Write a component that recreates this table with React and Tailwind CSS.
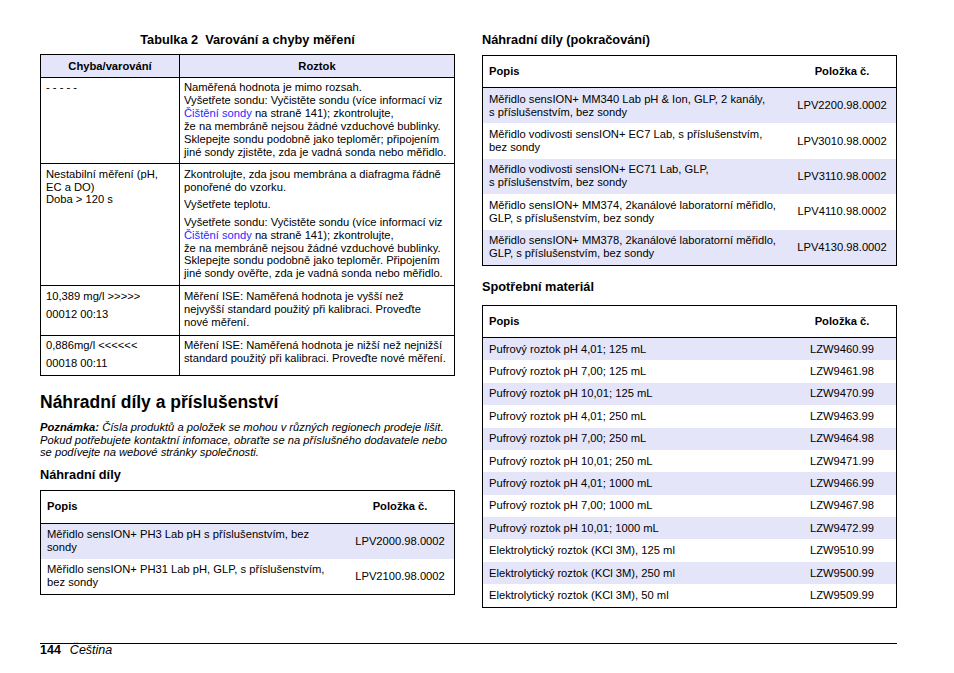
import React from 'react';

const lav = 'bg-[#e5e5f9]';

const partsTop = [
  ['Měřidlo sensION+ MM340 Lab pH & Ion, GLP, 2 kanály,', 's příslušenstvím, bez sondy', 'LPV2200.98.0002'],
  ['Měřidlo vodivosti sensION+ EC7 Lab, s příslušenstvím,', 'bez sondy', 'LPV3010.98.0002'],
  ['Měřidlo vodivosti sensION+ EC71 Lab, GLP,', 's příslušenstvím, bez sondy', 'LPV3110.98.0002'],
  ['Měřidlo sensION+ MM374, 2kanálové laboratorní měřidlo,', 'GLP, s příslušenstvím, bez sondy', 'LPV4110.98.0002'],
  ['Měřidlo sensION+ MM378, 2kanálové laboratorní měřidlo,', 'GLP, s příslušenstvím, bez sondy', 'LPV4130.98.0002'],
];

const partsLeft = [
  ['Měřidlo sensION+ PH3 Lab pH s příslušenstvím, bez', 'sondy', 'LPV2000.98.0002'],
  ['Měřidlo sensION+ PH31 Lab pH, GLP, s příslušenstvím,', 'bez sondy', 'LPV2100.98.0002'],
];

const consumables = [
  ['Pufrový roztok pH 4,01; 125 mL', 'LZW9460.99'],
  ['Pufrový roztok pH 7,00; 125 mL', 'LZW9461.98'],
  ['Pufrový roztok pH 10,01; 125 mL', 'LZW9470.99'],
  ['Pufrový roztok pH 4,01; 250 mL', 'LZW9463.99'],
  ['Pufrový roztok pH 7,00; 250 mL', 'LZW9464.98'],
  ['Pufrový roztok pH 10,01; 250 mL', 'LZW9471.99'],
  ['Pufrový roztok pH 4,01; 1000 mL', 'LZW9466.99'],
  ['Pufrový roztok pH 7,00; 1000 mL', 'LZW9467.98'],
  ['Pufrový roztok pH 10,01; 1000 mL', 'LZW9472.99'],
  ['Elektrolytický roztok (KCl 3M), 125 ml', 'LZW9510.99'],
  ['Elektrolytický roztok (KCl 3M), 250 ml', 'LZW9500.99'],
  ['Elektrolytický roztok (KCl 3M), 50 ml', 'LZW9509.99'],
];

const Link = ({ children }) => <span className="text-[#1f2bff]">{children}</span>;

const PartsHeader = ({ h }) => (
  <div className={`flex items-center border-b border-black font-bold ${h}`}>
    <div className="flex-1 pl-[6px]">Popis</div>
    <div className="w-[108px] text-center">Položka č.</div>
  </div>
);

const App = () => {
  return (
    <div className="w-[954px] h-[673px] bg-white text-black text-[11.2px] leading-[13px] whitespace-nowrap" style={{ fontFamily: '"Liberation Sans", Arial, sans-serif' }}>
      <div className="h-[643px] pt-[33px] pl-[40px] flex gap-[27px]">
        {/* Left column */}
        <div className="w-[415px] flex flex-col">
          <div className="text-center font-bold text-[12.75px] leading-[14px] whitespace-pre">Tabulka 2  Varování a chyby měření</div>

          <div className="mt-[7px] border border-black">
            <div className={`flex h-[23px] border-b border-black font-bold ${lav}`}>
              <div className="w-[139px] border-r border-black flex items-center justify-center">Chyba/varování</div>
              <div className="flex-1 flex items-center justify-center">Roztok</div>
            </div>

            <div className="flex h-[86px] border-b border-black">
              <div className="w-[139px] border-r border-black pl-[5px] pt-[3px]">- - - - -</div>
              <div className="flex-1 pl-[4px] pt-[3px]">
                Naměřená hodnota je mimo rozsah.<br />
                Vyšetřete sondu: Vyčistěte sondu (více informací viz<br />
                <Link>Čištění sondy</Link> na straně 141); zkontrolujte,<br />
                že na membráně nejsou žádné vzduchové bublinky.<br />
                Sklepejte sondu podobně jako teploměr; připojením<br />
                jiné sondy zjistěte, zda je vadná sonda nebo měřidlo.
              </div>
            </div>

            <div className="flex h-[122px] border-b border-black leading-[12.7px]">
              <div className="w-[139px] border-r border-black pl-[5px] pt-[4px]">
                Nestabilní měření (pH,<br />EC a DO)<br />Doba &gt; 120 s
              </div>
              <div className="flex-1 pl-[4px] pt-[4px]">
                <p>Zkontrolujte, zda jsou membrána a diafragma řádně<br />ponořené do vzorku.</p>
                <p className="mt-[5px]">Vyšetřete teplotu.</p>
                <p className="mt-[5px]">
                  Vyšetřete sondu: Vyčistěte sondu (více informací viz<br />
                  <Link>Čištění sondy</Link> na straně 141); zkontrolujte,<br />
                  že na membráně nejsou žádné vzduchové bublinky.<br />
                  Sklepejte sondu podobně jako teploměr. Připojením<br />
                  jiné sondy ověřte, zda je vadná sonda nebo měřidlo.
                </p>
              </div>
            </div>

            <div className="flex h-[50px] border-b border-black">
              <div className="w-[139px] border-r border-black pl-[5px] pt-[4px]">
                <p>10,389 mg/l &gt;&gt;&gt;&gt;&gt;</p>
                <p className="mt-[5px]">00012 00:13</p>
              </div>
              <div className="flex-1 pl-[4px] pt-[4px]">
                Měření ISE: Naměřená hodnota je vyšší než<br />
                nejvyšší standard použitý při kalibraci. Proveďte<br />
                nové měření.
              </div>
            </div>

            <div className="flex h-[39px]">
              <div className="w-[139px] border-r border-black pl-[5px] pt-[3px]">
                <p>0,886mg/l &lt;&lt;&lt;&lt;&lt;&lt;</p>
                <p className="mt-[5px]">00018 00:11</p>
              </div>
              <div className="flex-1 pl-[4px] pt-[3px]">
                Měření ISE: Naměřená hodnota je nižší než nejnižší<br />
                standard použitý při kalibraci. Proveďte nové měření.
              </div>
            </div>
          </div>

          <h1 className="mt-[15px] font-bold text-[17.5px] leading-[22px]">Náhradní díly a příslušenství</h1>

          <p className="mt-[8px] italic leading-[12.5px]">
            <span className="font-bold">Poznámka:</span> Čísla produktů a položek se mohou v různých regionech prodeje lišit.<br />
            Pokud potřebujete kontaktní infomace, obraťte se na příslušného dodavatele nebo<br />
            se podívejte na webové stránky společnosti.
          </p>

          <h2 className="mt-[9px] font-bold text-[12.75px] leading-[14px]">Náhradní díly</h2>

          <div className="mt-[8px] border border-black">
            <PartsHeader h="h-[33px]" />
            {partsLeft.map((r, i) => (
              <div key={r[2]} className={`flex items-center h-[35px] ${i % 2 === 0 ? lav : ''}`}>
                <div className="flex-1 pl-[6px]">{r[0]}<br />{r[1]}</div>
                <div className="w-[108px] text-center">{r[2]}</div>
              </div>
            ))}
          </div>
        </div>

        {/* Right column */}
        <div className="w-[415px] flex flex-col">
          <h2 className="font-bold text-[12.75px] leading-[14px]">Náhradní díly (pokračování)</h2>

          <div className="mt-[8px] border border-black">
            <PartsHeader h="h-[32px]" />
            {partsTop.map((r, i) => (
              <div key={r[2]} className={`flex items-center h-[35.4px] ${i % 2 === 0 ? lav : ''}`}>
                <div className="flex-1 pl-[6px]">{r[0]}<br />{r[1]}</div>
                <div className="w-[108px] text-center">{r[2]}</div>
              </div>
            ))}
          </div>

          <h2 className="mt-[14px] font-bold text-[12.75px] leading-[14px]">Spotřební materiál</h2>

          <div className="mt-[11px] border border-black">
            <PartsHeader h="h-[32px]" />
            {consumables.map((r, i) => (
              <div key={r[1]} className={`flex items-center h-[22.4px] ${i % 2 === 0 ? lav : ''}`}>
                <div className="flex-1 pl-[6px]">{r[0]}</div>
                <div className="w-[108px] text-center">{r[1]}</div>
              </div>
            ))}
          </div>
        </div>
      </div>

      {/* Footer */}
      <div className="ml-[40px] w-[857px] border-t border-black flex gap-[9px] text-[12.5px] leading-[13px]">
        <span className="font-bold">144</span>
        <span className="italic">Čeština</span>
      </div>
    </div>
  );
};

export default App;
